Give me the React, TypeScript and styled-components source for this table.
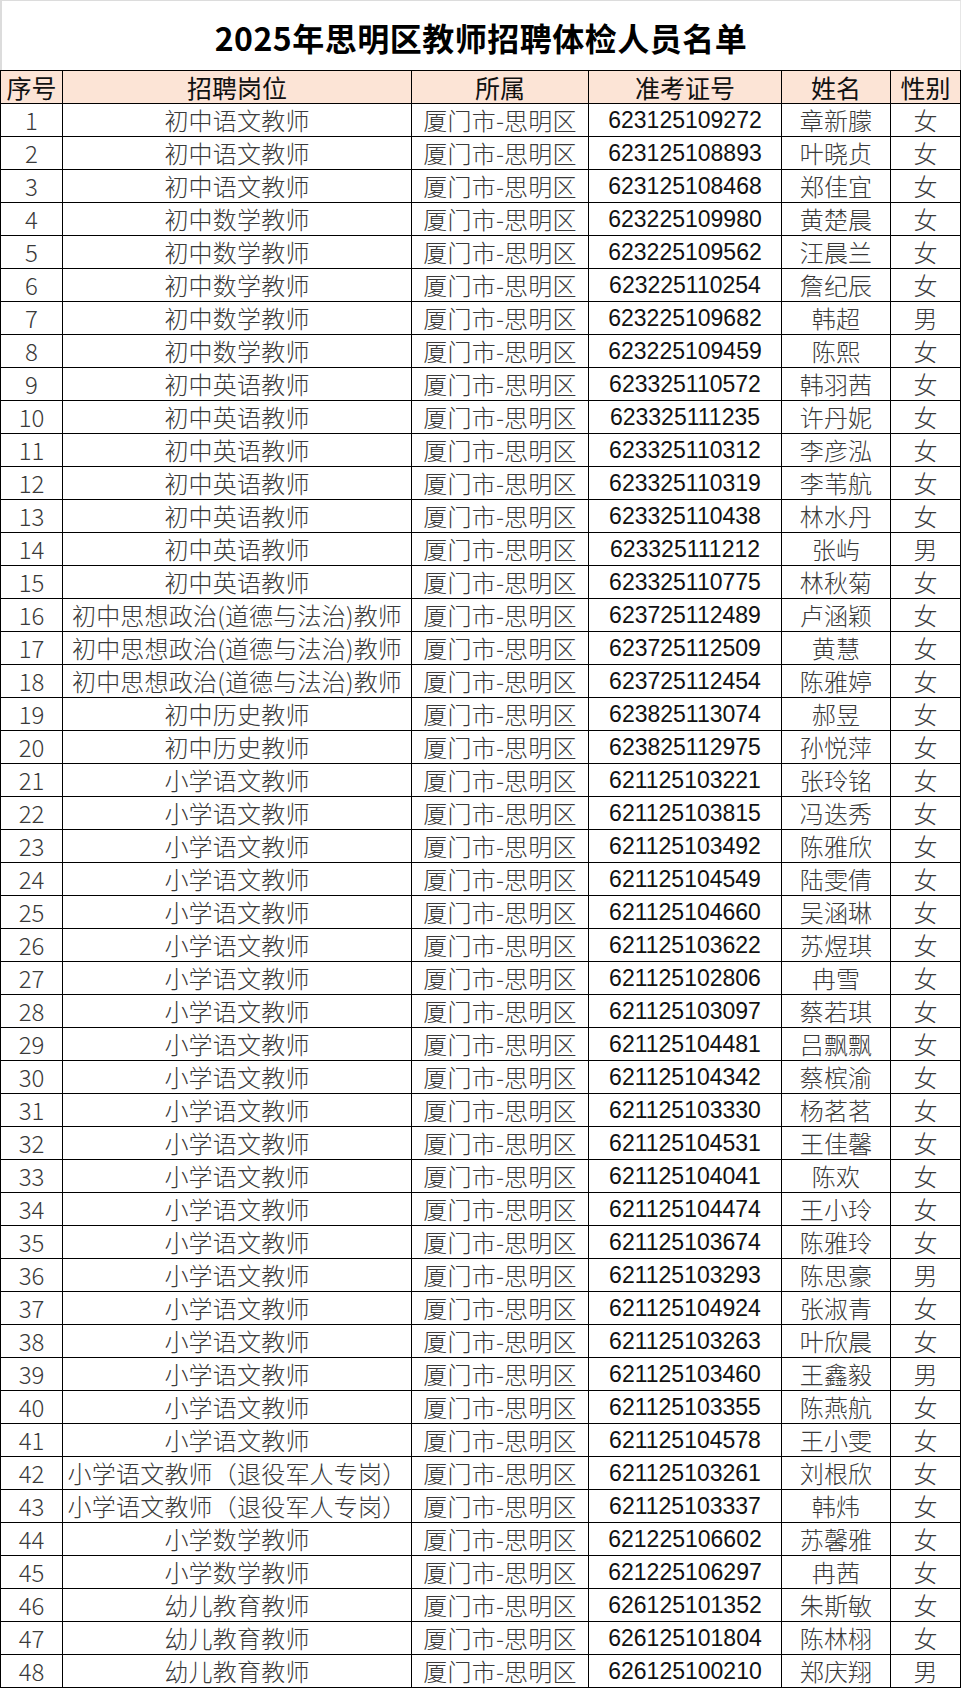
import React from "react";
import styled, { createGlobalStyle } from "styled-components";

const GlobalStyle = createGlobalStyle`
  html, body {
    margin: 0;
    padding: 0;
    background: #ffffff;
  }
  body {
    font-family: "Noto Sans CJK SC", "Noto Sans", sans-serif;
  }
  * { box-sizing: border-box; }
`;

const Page = styled.div`
  width: 961px;
  display: flex;
  flex-direction: column;
`;

const TitleBar = styled.div`
  height: 70px;
  display: flex;
  align-items: center;
  justify-content: center;
  border-top: 1px solid #dcdcdc;
  border-left: 2px solid #dcdcdc;
  border-right: 1px solid #e6e6e6;
  padding-top: 4px;
`;

const Title = styled.h1`
  margin: 0;
  font-family: "Noto Sans CJK SC", "Noto Sans", sans-serif;
  font-weight: 700;
  font-size: 32px;
  letter-spacing: 0.5px;
  line-height: 1.2;
  color: #000;
`;

const Grid = styled.div`
  display: grid;
  grid-template-columns: 62px 349px 177px 193px 109px 70px;
  grid-auto-rows: 33px;
  border-left: 1px solid #000;
  border-top: 1px solid #000;
`;

type CellKind = "head" | "seq" | "text" | "id";

const Cell = styled.div<{ $kind: CellKind }>`
  display: flex;
  align-items: center;
  justify-content: center;
  border-right: 1px solid #000;
  border-bottom: 1px solid #000;
  white-space: nowrap;
  padding-top: ${(p) => (p.$kind === "id" ? "1px" : "0")};
  background: ${(p) => (p.$kind === "head" ? "#fce4d6" : "#ffffff")};
  color: ${(p) =>
    p.$kind === "head" ? "#111" : p.$kind === "id" ? "#111" : "#3a3a3a"};
  font-family: ${(p) =>
    p.$kind === "id"
      ? `"Liberation Sans", Arial, sans-serif`
      : `"Noto Sans CJK SC", "Noto Sans", sans-serif`};
  font-weight: ${(p) => (p.$kind === "head" || p.$kind === "id" ? 400 : 300)};
  font-size: ${(p) =>
    p.$kind === "head" ? "25px" : p.$kind === "id" ? "23px" : "24px"};
  letter-spacing: ${(p) => (p.$kind === "text" ? "0.2px" : "0")};
  line-height: 1.2;
`;

type Row = [string, string, string, string];

const P1 = "初中语文教师";
const P2 = "初中数学教师";
const P3 = "初中英语教师";
const P4 = "初中思想政治(道德与法治)教师";
const P5 = "初中历史教师";
const P6 = "小学语文教师";
const P7 = "小学语文教师（退役军人专岗）";
const P8 = "小学数学教师";
const P9 = "幼儿教育教师";

const rows: Row[] = [
  [P1, "623125109272", "章新朦", "女"],
  [P1, "623125108893", "叶晓贞", "女"],
  [P1, "623125108468", "郑佳宜", "女"],
  [P2, "623225109980", "黄楚晨", "女"],
  [P2, "623225109562", "汪晨兰", "女"],
  [P2, "623225110254", "詹纪辰", "女"],
  [P2, "623225109682", "韩超", "男"],
  [P2, "623225109459", "陈熙", "女"],
  [P3, "623325110572", "韩羽茜", "女"],
  [P3, "623325111235", "许丹妮", "女"],
  [P3, "623325110312", "李彦泓", "女"],
  [P3, "623325110319", "李苇航", "女"],
  [P3, "623325110438", "林水丹", "女"],
  [P3, "623325111212", "张屿", "男"],
  [P3, "623325110775", "林秋菊", "女"],
  [P4, "623725112489", "卢涵颖", "女"],
  [P4, "623725112509", "黄慧", "女"],
  [P4, "623725112454", "陈雅婷", "女"],
  [P5, "623825113074", "郝昱", "女"],
  [P5, "623825112975", "孙悦萍", "女"],
  [P6, "621125103221", "张玲铭", "女"],
  [P6, "621125103815", "冯迭秀", "女"],
  [P6, "621125103492", "陈雅欣", "女"],
  [P6, "621125104549", "陆雯倩", "女"],
  [P6, "621125104660", "吴涵琳", "女"],
  [P6, "621125103622", "苏煜琪", "女"],
  [P6, "621125102806", "冉雪", "女"],
  [P6, "621125103097", "蔡若琪", "女"],
  [P6, "621125104481", "吕飘飘", "女"],
  [P6, "621125104342", "蔡槟渝", "女"],
  [P6, "621125103330", "杨茗茗", "女"],
  [P6, "621125104531", "王佳馨", "女"],
  [P6, "621125104041", "陈欢", "女"],
  [P6, "621125104474", "王小玲", "女"],
  [P6, "621125103674", "陈雅玲", "女"],
  [P6, "621125103293", "陈思豪", "男"],
  [P6, "621125104924", "张淑青", "女"],
  [P6, "621125103263", "叶欣晨", "女"],
  [P6, "621125103460", "王鑫毅", "男"],
  [P6, "621125103355", "陈燕航", "女"],
  [P6, "621125104578", "王小雯", "女"],
  [P7, "621125103261", "刘根欣", "女"],
  [P7, "621125103337", "韩炜", "女"],
  [P8, "621225106602", "苏馨雅", "女"],
  [P8, "621225106297", "冉茜", "女"],
  [P9, "626125101352", "朱斯敏", "女"],
  [P9, "626125101804", "陈林栩", "女"],
  [P9, "626125100210", "郑庆翔", "男"],
];

const headers = ["序号", "招聘岗位", "所属", "准考证号", "姓名", "性别"];

export default function App() {
  return (
    <>
      <GlobalStyle />
      <Page>
        <TitleBar>
          <Title>2025年思明区教师招聘体检人员名单</Title>
        </TitleBar>
        <Grid>
          {headers.map((h) => (
            <Cell key={h} $kind="head">
              {h}
            </Cell>
          ))}
          {rows.map((r, i) => (
            <React.Fragment key={r[1]}>
              <Cell $kind="seq">{i + 1}</Cell>
              <Cell $kind="text">{r[0]}</Cell>
              <Cell $kind="text">厦门市-思明区</Cell>
              <Cell $kind="id">{r[1]}</Cell>
              <Cell $kind="text">{r[2]}</Cell>
              <Cell $kind="text">{r[3]}</Cell>
            </React.Fragment>
          ))}
        </Grid>
      </Page>
    </>
  );
}
